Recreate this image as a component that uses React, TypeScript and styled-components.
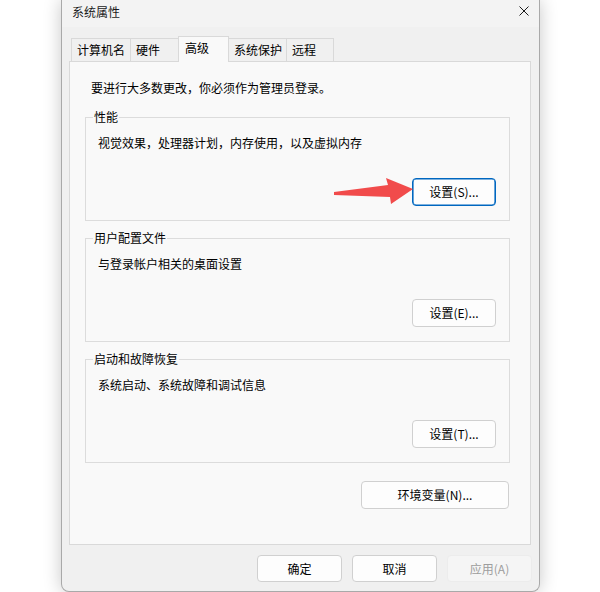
import styled, { createGlobalStyle } from "styled-components";

const GlobalStyle = createGlobalStyle`
  body {
    margin: 0;
    background: #ffffff;
    font-family: "Noto Sans CJK SC", "Noto Sans", sans-serif;
    font-size: 12px;
    color: #000000;
  }
`;

const Stage = styled.div`
  position: relative;
  width: 600px;
  height: 592px;
  padding-left: 61px;
  box-sizing: border-box;
  overflow: hidden;
  background: #ffffff;
`;

const Window = styled.div`
  width: 479px;
  height: 592px;
  box-sizing: border-box;
  display: flex;
  flex-direction: column;
  background: #f0f0f0;
  border: 1px solid #a9a9a9;
  border-top: none;
  border-radius: 0 0 8px 8px;
  box-shadow: 0 0 18px rgba(0, 0, 0, 0.22);
`;

const TitleBar = styled.div`
  height: 27px;
  flex-shrink: 0;
  display: flex;
  align-items: center;
  justify-content: space-between;
  padding: 0 10px 3px 10px;
  box-sizing: border-box;
  background: #f3f3f3;
`;

const Title = styled.span`
  line-height: 16px;
  color: #1a1a1a;
`;

const CloseIcon = styled.svg`
  width: 10px;
  height: 10px;
  margin-top: -2px;
`;

const Content = styled.div`
  flex: 1;
  display: flex;
  flex-direction: column;
  padding: 9px 8px 0 7px;
  min-height: 0;
`;

const TabStrip = styled.div`
  position: relative;
  z-index: 1;
  height: 26px;
  margin-bottom: -1px;
  padding-left: 2px;
  display: flex;
  align-items: flex-start;
`;

const Tab = styled.div<{ $width: number; $active?: boolean }>`
  width: ${({ $width }) => $width}px;
  height: ${({ $active }) => ($active ? 26 : 23)}px;
  margin-top: ${({ $active }) => ($active ? 0 : 2)}px;
  box-sizing: border-box;
  padding: 3px 0 0 ${({ $active }) => ($active ? 6 : 5)}px;
  line-height: 16px;
  border: 1px solid #d9d9d9;
  border-bottom: none;
  background: ${({ $active }) => ($active ? "#f9f9f9" : "#f0f0f0")};
  color: #000000;
  white-space: nowrap;
  position: relative;
  z-index: ${({ $active }) => ($active ? 2 : 1)};

  & + & {
    margin-left: -1px;
  }
`;

const Panel = styled.div`
  flex: 1;
  display: flex;
  flex-direction: column;
  background: #f9f9f9;
  border: 1px solid #d9d9d9;
  padding: 18px 20px 0 15px;
`;

const Notice = styled.div`
  line-height: 16px;
  padding-left: 6px;
  margin-bottom: 13px;
`;

const Group = styled.fieldset`
  margin: 0 0 9px 0;
  padding: 0 13px 14px 12px;
  border: 1px solid #dcdcdc;
  min-width: 0;
  display: flex;
  flex-direction: column;
`;

const Legend = styled.legend`
  margin-left: -5px;
  padding: 0 1px;
  line-height: 16px;
  color: #000000;
`;

const Description = styled.div`
  margin-top: 10px;
  line-height: 16px;
`;

const ButtonRow = styled.div<{ $gap?: number }>`
  display: flex;
  justify-content: flex-end;
  margin-top: ${({ $gap }) => $gap ?? 0}px;
`;

const Button = styled.button<{ $width?: number; $focused?: boolean }>`
  width: ${({ $width }) => $width ?? 84}px;
  height: 28px;
  box-sizing: border-box;
  padding: 0;
  font-family: inherit;
  font-size: 12px;
  line-height: 16px;
  color: #000000;
  background: #fdfdfd;
  border: 1px solid ${({ $focused }) => ($focused ? "#0067c0" : "#d0d0d0")};
  box-shadow: ${({ $focused }) => ($focused ? "inset 0 0 0 0.6px #0067c0" : "none")};
  border-radius: 4px;
`;

const EnvRow = styled(ButtonRow)`
  margin-top: 9px;
  margin-right: 1px;
`;

const Footer = styled.div`
  flex-shrink: 0;
  display: flex;
  justify-content: flex-end;
  gap: 10px;
  padding: 10px 7px 9px 0;
`;

const FooterButton = styled(Button)<{ $disabled?: boolean }>`
  width: 85px;
  height: 27px;
  background: ${({ $disabled }) => ($disabled ? "#f5f5f5" : "#fdfdfd")};
  border-color: ${({ $disabled }) => ($disabled ? "#ececec" : "#d0d0d0")};
  color: ${({ $disabled }) => ($disabled ? "#9d9d9d" : "#000000")};
`;

const Arrow = styled.svg`
  position: absolute;
  left: 330px;
  top: 176px;
  width: 85px;
  height: 32px;
`;

const tabs = [
  { label: "计算机名", width: 60 },
  { label: "硬件", width: 49 },
  { label: "高级", width: 51, active: true },
  { label: "系统保护", width: 59 },
  { label: "远程", width: 48 },
];

const groups = [
  { title: "性能", text: "视觉效果，处理器计划，内存使用，以及虚拟内存", button: "设置(S)...", focused: true },
  { title: "用户配置文件", text: "与登录帐户相关的桌面设置", button: "设置(E)..." },
  { title: "启动和故障恢复", text: "系统启动、系统故障和调试信息", button: "设置(T)..." },
];

export default function App() {
  return (
    <>
      <GlobalStyle />
      <Stage>
        <Window>
          <TitleBar>
            <Title>系统属性</Title>
            <CloseIcon viewBox="0 0 10 10">
              <path d="M0.5 0.5 L9.5 9.5 M9.5 0.5 L0.5 9.5" stroke="#1a1a1a" strokeWidth="1" fill="none" />
            </CloseIcon>
          </TitleBar>
          <Content>
            <TabStrip>
              {tabs.map((t) => (
                <Tab key={t.label} $width={t.width} $active={t.active}>
                  {t.label}
                </Tab>
              ))}
            </TabStrip>
            <Panel>
              <Notice>要进行大多数更改，你必须作为管理员登录。</Notice>
              {groups.map((g) => (
                <Group key={g.title}>
                  <Legend>{g.title}</Legend>
                  <Description>{g.text}</Description>
                  <ButtonRow $gap={27}>
                    <Button $focused={g.focused}>{g.button}</Button>
                  </ButtonRow>
                </Group>
              ))}
              <EnvRow>
                <Button $width={148}>环境变量(N)...</Button>
              </EnvRow>
            </Panel>
          </Content>
          <Footer>
            <FooterButton>确定</FooterButton>
            <FooterButton>取消</FooterButton>
            <FooterButton $disabled>应用(A)</FooterButton>
          </Footer>
        </Window>
        <Arrow viewBox="0 0 85 32">
          <polygon points="4,16 58,9 56,2 83,13 61,28 60,21 4,19" fill="#f14b4b" />
        </Arrow>
      </Stage>
    </>
  );
}
